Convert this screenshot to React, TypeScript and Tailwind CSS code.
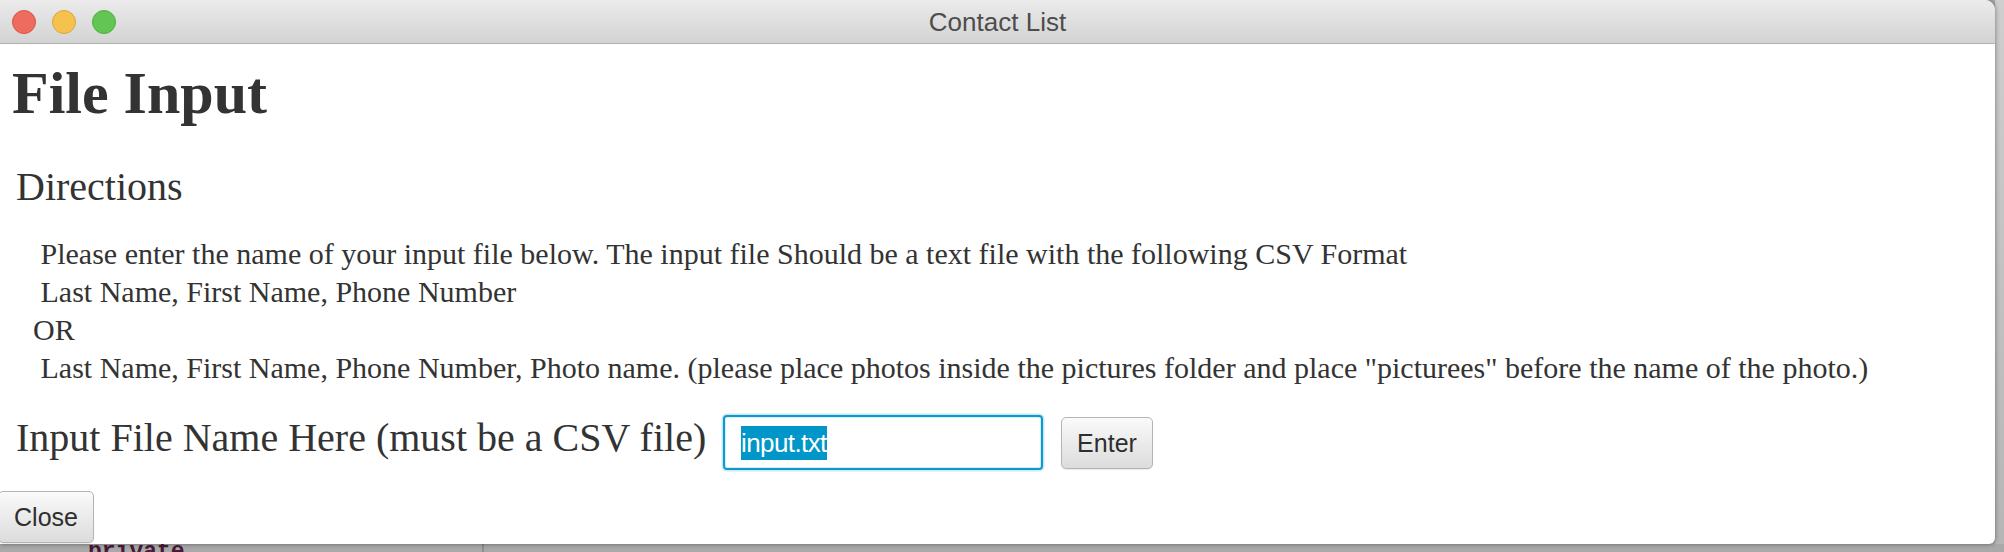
import React from "react";

const serif = { fontFamily: '"Liberation Serif", "Times New Roman", serif' };
const sans = { fontFamily: '"Liberation Sans", Arial, Helvetica, sans-serif' };
const mono = { fontFamily: '"Liberation Mono", "Courier New", monospace' };

function MacButton({ label, className }: { label: string; className: string }) {
  return (
    <button
      type="button"
      style={sans}
      className={
        "flex items-center justify-center rounded-[5px] border-[1.5px] border-[#b4b4b4] bg-gradient-to-b from-[#fafafa] to-[#dcdcdc] text-[25px] leading-none text-[#2e2e2e] shadow-[0_1px_1px_rgba(0,0,0,0.08)] " +
        className
      }
    >
      {label}
    </button>
  );
}

export default function App() {
  return (
    <div className="flex h-[552px] w-[2004px] flex-col overflow-hidden bg-[#a9a9a9]">
      <div className="flex h-[544px] w-full">
        {/* Window */}
        <div className="relative z-10 flex h-[544px] w-[1995px] flex-col overflow-hidden rounded-tr-[10px] rounded-br-[6px] bg-white shadow-[0_0_5px_rgba(0,0,0,0.45)]">
          {/* Title bar */}
          <div className="relative flex h-[44px] shrink-0 items-start border-b border-[#b1b1b1] bg-gradient-to-b from-[#ebebeb] to-[#d3d3d3]">
            <div className="flex items-center gap-[16px] pl-[12px] pt-[10px]">
              <span className="h-[24px] w-[24px] rounded-full border border-[#dc5247] bg-[#ee6b60]" />
              <span className="h-[24px] w-[24px] rounded-full border border-[#dba43a] bg-[#f5c250]" />
              <span className="h-[24px] w-[24px] rounded-full border border-[#4fae43] bg-[#62c554]" />
            </div>
            <div
              style={sans}
              className="absolute inset-x-0 top-[2px] text-center text-[26px] leading-[41px] text-[#4d4d4d]"
            >
              Contact List
            </div>
          </div>

          {/* Content */}
          <div className="flex flex-1 flex-col text-[#333333]">
            <h1 style={serif} className="pl-[12px] pt-[13px] text-[60px] font-bold leading-[72px]">
              File Input
            </h1>
            <div style={serif} className="mt-[34px] pl-[16px] text-[40px] leading-[48px]">
              Directions
            </div>
            <div style={serif} className="mt-[24px] whitespace-pre pl-[33px] text-[30px] leading-[38px]">
              <div>{" Please enter the name of your input file below. The input file Should be a text file with the following CSV Format"}</div>
              <div>{" Last Name, First Name, Phone Number"}</div>
              <div>{"OR"}</div>
              <div>{' Last Name, First Name, Phone Number, Photo name. (please place photos inside the pictures folder and place "picturees" before the name of the photo.)'}</div>
            </div>
            <div className="mt-[27px] flex items-start">
              <div style={serif} className="ml-[16px] w-[706px] shrink-0 whitespace-nowrap text-[40px] leading-[48px]">
                Input File Name Here (must be a CSV file)
              </div>
              <div className="ml-[1px] mt-[1px] flex h-[55px] w-[320px] items-center rounded-[4px] border-2 border-[#0b9ad0] pl-[16px] shadow-[0_0_0_1.5px_#cbe8f5,inset_0_0_0_1px_#d6eef8]">
                <span style={sans} className="inline-block bg-[#0096c9] text-[26px] leading-[34px] tracking-[-0.6px] text-white">
                  input.txt
                </span>
              </div>
              <MacButton label="Enter" className="ml-[18px] mt-[3px] h-[52px] w-[92px]" />
            </div>
            <MacButton label="Close" className="-ml-[2px] mt-[21px] h-[52px] w-[96px]" />
          </div>
        </div>
        {/* Right backdrop strip */}
        <div className="h-full flex-1 bg-gradient-to-b from-[#cfcfcf] to-[#b6b6b6]" />
      </div>
      {/* Bottom backdrop strip */}
      <div className="flex h-[8px] w-full overflow-hidden">
        <div className="h-full w-[482px] bg-[#a9a9a9] pl-[88px]">
          <div style={mono} className="-mt-[3px] text-[23px] font-bold leading-[23px] text-[#4a1a38]">
            private
          </div>
        </div>
        <div className="h-full w-[2px] bg-[#8e8e8e]" />
        <div className="h-full flex-1 bg-[#a9a9a9]" />
      </div>
    </div>
  );
}
